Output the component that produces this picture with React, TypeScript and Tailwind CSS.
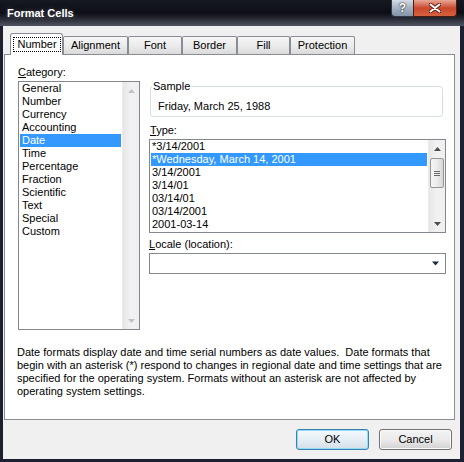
import React from 'react';

const categories = ['General', 'Number', 'Currency', 'Accounting', 'Date', 'Time', 'Percentage', 'Fraction', 'Scientific', 'Text', 'Special', 'Custom'];
const types = ['*3/14/2001', '*Wednesday, March 14, 2001', '3/14/2001', '3/14/01', '03/14/01', '03/14/2001', '2001-03-14'];

const tabs = [
  { label: 'Alignment', w: 'w-[65px]' },
  { label: 'Font', w: 'w-[54px]' },
  { label: 'Border', w: 'w-[55px]' },
  { label: 'Fill', w: 'w-[53px]' },
  { label: 'Protection', w: 'w-[65px]' },
];

function Arrow({ up, color }: { up?: boolean; color: string }) {
  return (
    <svg width="7" height="4" viewBox="0 0 7 4">
      <path d={up ? 'M3.5 0L7 4H0z' : 'M0 0H7L3.5 4z'} fill={color} />
    </svg>
  );
}

function ScrollBar({ enabled }: { enabled?: boolean }) {
  const c = enabled ? '#4d4d4d' : '#c2c2c2';
  return (
    <div className="w-[17px] flex flex-col bg-gradient-to-r from-[#e6e6e6] via-[#f2f2f2] to-[#efefef] border-l border-[#ececec]">
      <div className="h-[17px] flex items-center justify-center">
        <Arrow up color={c} />
      </div>
      <div className="flex-1">
        {enabled && (
          <div className="mt-[1px] mx-[1px] h-[30px] rounded-[2px] border border-[#959595] bg-gradient-to-r from-[#f5f5f5] via-[#ececec] to-[#d6d6d6] flex flex-col items-center justify-center gap-[1px]">
            <div className="w-[6px] h-px bg-[#6b6b6b]" />
            <div className="w-[6px] h-px bg-[#6b6b6b]" />
            <div className="w-[6px] h-px bg-[#6b6b6b]" />
          </div>
        )}
      </div>
      <div className="h-[17px] flex items-center justify-center">
        <Arrow color={c} />
      </div>
    </div>
  );
}

export default function App() {
  return (
    <div className="w-[464px] h-[462px] bg-[#1c2030] flex flex-col font-['Liberation_Sans',Arial,sans-serif] text-[11px] leading-[13px] text-black">
      {/* title bar */}
      <div className="h-[26px] flex items-start pl-[7px] pr-[7px] bg-gradient-to-b from-[#171923] via-[#0d0e15] to-[#4f5563]">
        <span className="mt-[7px] text-[11px] font-bold text-white [text-shadow:0_0_4px_rgba(255,255,255,0.3)]">Format Cells</span>
        <div className="ml-auto flex h-[17px]">
          <div className="w-[22px] h-[17px] rounded-bl-[4px] border border-t-0 border-r-0 border-[#30384a] bg-gradient-to-b from-[#d4dbe4] via-[#a5b1c1] to-[#8394aa] flex items-center justify-center">
            <span className="text-[12px] font-bold text-white leading-none [text-shadow:0_0_1px_#222,0_0_2px_#333]">?</span>
          </div>
          <div className="w-[44px] h-[17px] rounded-br-[4px] border border-t-0 border-[#4a1b12] bg-gradient-to-b from-[#e7a797] via-[#c9472c] to-[#d7623f] flex items-center justify-center">
            <svg width="12" height="10" viewBox="0 0 12 10">
              <path d="M1.5 1.5L10.5 8.5M10.5 1.5L1.5 8.5" stroke="#5a1a10" strokeWidth="3.6" strokeLinecap="round" />
              <path d="M1.5 1.5L10.5 8.5M10.5 1.5L1.5 8.5" stroke="#ffffff" strokeWidth="2" strokeLinecap="round" />
            </svg>
          </div>
        </div>
      </div>

      {/* body */}
      <div className="flex-1 ml-[3px] mr-[4px] mb-[3px] bg-[#f0f0f0] flex flex-col pl-[1px] pr-[5px] pt-[7px]">
        {/* tabs */}
        <div className="relative z-10 -mb-px h-[22px] ml-[6px] flex items-end">
          <div className="w-[53px] h-[22px] bg-white border border-b-0 border-[#898c95] rounded-t-[3px] pt-[3px] pl-[2px] pr-[1px]">
            <div className="h-[15px] border border-dotted border-black flex items-center justify-center">Number</div>
          </div>
          {tabs.map((t) => (
            <div
              key={t.label}
              className={`${t.w} h-[18px] mb-[1px] border border-b-0 border-[#898c95] rounded-t-[2px] bg-gradient-to-b from-[#f6f6f6] via-[#ececec] to-[#dadada] flex items-center justify-center`}
            >
              {t.label}
            </div>
          ))}
        </div>

        {/* panel */}
        <div className="h-[366px] bg-white border border-[#898c95] pt-[11px] flex flex-col">
          <div className="flex">
            <div className="pl-[13px]">
              <div className="mb-[2px]">
                <span className="underline">C</span>ategory:
              </div>
              <div className="w-[122px] h-[249px] border border-[#828790] flex">
                <div className="flex-1 px-[1px]">
                  {categories.map((c) => (
                    <div key={c} className={`h-[13px] pl-[2px] ${c === 'Date' ? 'bg-[#3399ff] text-white' : ''}`}>
                      {c}
                    </div>
                  ))}
                </div>
                <ScrollBar />
              </div>
            </div>

            <div className="ml-[9px] pt-[14px] flex flex-col">
              <fieldset className="ml-[1px] w-[293px] border border-[#d5dfe5] rounded-[3px] pl-[7px] pt-[7px] pb-[3px]">
                <legend className="ml-[-6px] px-[1px]">Sample</legend>
                <div className="h-[13px]">Friday, March 25, 1988</div>
              </fieldset>

              <div className="mt-[7px] mb-[2px] pl-[1px]">
                <span className="underline">T</span>ype:
              </div>
              <div className="w-[297px] h-[94px] border border-[#828790] flex">
                <div className="flex-1 px-[1px]">
                  {types.map((t, i) => (
                    <div key={t} className={`h-[13px] pl-[1px] ${i === 1 ? 'bg-[#3399ff] text-white' : ''}`}>
                      {t}
                    </div>
                  ))}
                </div>
                <ScrollBar enabled />
              </div>

              <div className="mt-[5px] mb-[2px]">
                <span className="underline">L</span>ocale (location):
              </div>
              <div className="w-[297px] h-[21px] border border-[#828790] bg-white flex items-center justify-end pr-[6px]">
                <svg width="7" height="5" viewBox="0 0 7 5">
                  <path d="M0 0.5H7L3.5 4.5z" fill="#1f2740" />
                </svg>
              </div>
            </div>
          </div>

          <div className="mt-[16px] pl-[12px] whitespace-pre">
            {'Date formats display date and time serial numbers as date values.  Date formats that\nbegin with an asterisk (*) respond to changes in regional date and time settings that are\nspecified for the operating system. Formats without an asterisk are not affected by\noperating system settings.'}
          </div>
        </div>

        {/* buttons */}
        <div className="mt-[9px] h-[21px] flex justify-end gap-[10px] pr-[3px]">
          <button className="w-[73px] h-[21px] rounded-[3px] border border-[#3c7fb1] bg-gradient-to-b from-[#f4f9fc] via-[#e6eff5] to-[#d3dee6] shadow-[inset_0_0_0_1px_#8fdcf5] text-[11px]">
            OK
          </button>
          <button className="w-[73px] h-[21px] rounded-[3px] border border-[#707070] bg-gradient-to-b from-[#f2f2f2] via-[#ebebeb] to-[#d2d2d2] shadow-[inset_0_0_0_1px_#fbfbfb] text-[11px]">
            Cancel
          </button>
        </div>
      </div>
    </div>
  );
}
